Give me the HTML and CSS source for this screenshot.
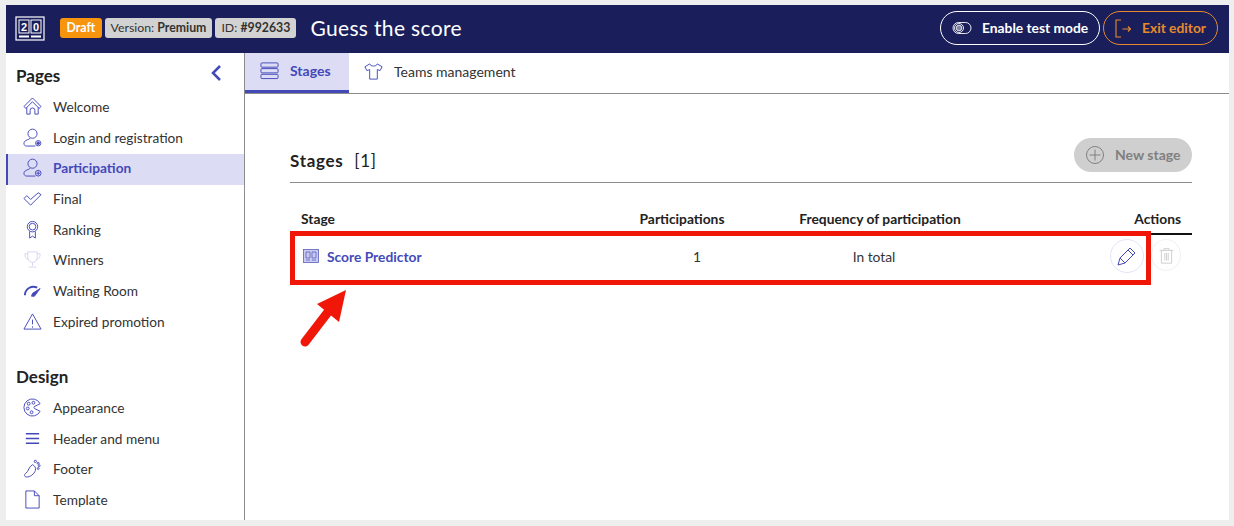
FILE: index.html
```html
<!DOCTYPE html>
<html lang="en">
<head>
<meta charset="utf-8">
<title>Guess the score</title>
<link rel="stylesheet" href="styles.css">
</head>
<body>
<div class="app">
  <header class="topbar">
    <svg class="logo" width="30" height="25" viewBox="0 0 30 25" fill="none" stroke="#fff"><rect x="1" y="1" width="28" height="23" stroke-width="1.2"/><rect x="4" y="4" width="10" height="13" stroke-width="1"/><rect x="16" y="4" width="10" height="13" stroke-width="1"/><text class="logo-num" x="9" y="15" text-anchor="middle">2</text><text class="logo-num" x="21" y="15" text-anchor="middle">0</text><path d="M4 20.500h10M16 20.500h10" stroke-width="2"/></svg>
    <span class="badge draft">Draft</span>
    <span class="badge">Version: <b>Premium</b></span>
    <span class="badge">ID: <b>#992633</b></span>
    <h1 class="title">Guess the score</h1>
    <button class="pill test">
      <svg width="20" height="14" viewBox="0 0 20 14" fill="none" stroke="#fff" stroke-width=".9"><rect x="1" y="1.500" width="18" height="11" rx="5.500"/><circle cx="7" cy="7" r="4.500"/><circle cx="7" cy="7" r="2.800"/><path d="M6 5v4M8 5v4"/></svg>
      <span class="pill-label">Enable test mode</span>
    </button>
    <button class="pill exit">
      <svg width="17" height="19" viewBox="0 0 17 19" fill="none" stroke="#e58a2c" stroke-width="1.100"><path d="M6 1H1v17h5M7.500 10h8M13 7.500l2.500 2.500-2.500 2.500"/></svg>
      <span class="pill-label">Exit editor</span>
    </button>
  </header>
  <div class="body">
    <aside class="sidebar">
      <div class="side-head"><h2>Pages</h2>
        <svg class="collapse" width="12" height="18" viewBox="0 0 12 18" fill="none" stroke="#4449b8" stroke-width="2.500"><path d="M10 2 3 9l7 7"/></svg>
      </div>
      <nav class="menu">
        <a class="item"><svg class="ic" viewBox="0 0 20 20"><path d="M1 10 10 1l9 9-2 2-7-7-7 7zM4 11v7h3.500v-4a2.500 2.500 0 0 1 5 0v4H16v-7"/></svg>Welcome</a>
        <a class="item"><svg class="ic" viewBox="0 0 20 20"><circle cx="10" cy="6" r="4.800"/><path d="M7.500 10.500c-.5 2-6.500 2-6.500 5.500 0 2 1 3 3 3h9"/><circle cx="16" cy="16" r="2.800"/><circle cx="16" cy="16" r="1.300" fill="#4449b8"/></svg>Login and registration</a>
        <a class="item active"><svg class="ic" viewBox="0 0 20 20"><circle cx="10" cy="6" r="4.800"/><path d="M7.500 10.500c-.5 2-6.500 2-6.500 5.500 0 2 1 3 3 3h9"/><circle cx="16" cy="16" r="3"/><path d="M16 14v4M14 16h4"/></svg>Participation</a>
        <a class="item"><svg class="ic" viewBox="0 0 20 20"><path d="m1 10 3-3 4 4 8-7 3 2-11 11z"/></svg>Final</a>
        <a class="item"><svg class="ic" viewBox="0 0 20 20"><circle cx="10" cy="7" r="5.500"/><circle cx="10" cy="7" r="3.500"/><path d="M7 12v7l3-2 3 2v-7"/></svg>Ranking</a>
        <a class="item"><svg class="ic faint" viewBox="0 0 20 20"><path d="M5 2h10v6a5 5 0 0 1-10 0zM5 4H2c0 4 1 5 4 6M15 4h3c0 4-1 5-4 6M10 13v4M6 18h8"/></svg>Winners</a>
        <a class="item"><svg class="ic" viewBox="0 0 20 20"><path d="M2 15a9 9 0 0 1 13-8" stroke-width="2"/><path d="m18 8-8 5-1 3 3 0z" fill="#4449b8"/></svg>Waiting Room</a>
        <a class="item"><svg class="ic" viewBox="0 0 20 20"><path d="M10 2 1 18h18zM10 8v5M10 15v1.500"/></svg>Expired promotion</a>
      </nav>
      <h2 class="design">Design</h2>
      <nav class="menu">
        <a class="item"><svg class="ic" viewBox="0 0 20 20"><path d="M18 14a9 9 0 1 1 0-8l-6 3a1.500 1.500 0 0 0 0 2z"/><circle cx="6" cy="6" r="1.500"/><circle cx="11" cy="5" r="1.500"/><circle cx="5" cy="11" r="1.500"/><circle cx="9" cy="15" r="1.500"/></svg>Appearance</a>
        <a class="item"><svg class="ic thick" viewBox="0 0 20 20"><path d="M3 5h14M3 10h14M3 15h14"/></svg>Header and menu</a>
        <a class="item"><svg class="ic" viewBox="0 0 20 20"><path d="M10 6c2 1 4 3 3 6-1 4-6 7-9 7-3 0-3-3-1-4 3-2 3-7 7-9z"/><circle cx="13" cy="2.500" r="1.200"/><circle cx="16" cy="4.500" r="1"/><circle cx="17" cy="7" r="1"/><circle cx="16" cy="10" r="1"/></svg>Footer</a>
        <a class="item"><svg class="ic" viewBox="0 0 20 20"><path d="M3 1h9l5 5v13H3zM12 1v5h5"/></svg>Template</a>
      </nav>
    </aside>
    <main class="main">
      <div class="tabs">
        <a class="tab on"><svg class="ic tabic" viewBox="0 0 20 20"><rect x="1" y="2" width="18" height="4.500" rx="1"/><rect x="1" y="8" width="18" height="4.500" rx="1"/><rect x="1" y="14" width="18" height="4.500" rx="1"/></svg>Stages</a>
        <a class="tab"><svg class="ic tabic" viewBox="0 0 20 20"><path d="M6 2 1 5l2 4 3-1v10h8V8l3 1 2-4-5-3c-1 3-7 3-8 0z"/></svg>Teams management</a>
      </div>
      <section class="content">
        <div class="stage-head">
          <h3>Stages <span class="count">[1]</span></h3>
          <button class="new"><svg width="20" height="20" viewBox="0 0 20 20" fill="none" stroke="#808080"><circle cx="10" cy="10" r="8.500"/><path d="M10 4.500v11M4.500 10h11"/></svg>New stage</button>
        </div>
        <div class="thead row">
          <span class="c1">Stage</span><span class="c2">Participations</span><span class="c3">Frequency of participation</span><span class="c4">Actions</span>
        </div>
        <div class="row tbody">
          <span class="c1 stage"><svg width="16" height="14" viewBox="0 0 16 14" fill="#c9cbee" stroke="#5b5fc0" stroke-width=".8"><rect x=".5" y=".5" width="15" height="13"/><path d="M3 3h4v6H3zM9 3h4v6H9zM3 11h4M9 11h4"/></svg>Score Predictor</span>
          <span class="c2">1</span>
          <span class="c3">In total</span>
          <span class="c4 acts">
            <span class="round edit"><svg class="ic" viewBox="0 0 20 20"><path d="M1 19l2-7L13 2l5 5L8 17zM3 12l5 5M11 4l5 5"/></svg></span>
            <span class="round del"><svg class="ic gray" viewBox="0 0 20 20"><path d="M2 4h16M7 4V2h6v2M4 4v15h12V4M8 7v9M10 7v9M12 7v9"/></svg></span>
          </span>
        </div>
      </section>
    </main>
  </div>
  <div class="redbox"></div>
  <svg class="arrow" width="50" height="64" viewBox="0 0 50 64" fill="#f11708"><path d="M7 54 30 24" stroke="#f11708" stroke-width="9" stroke-linecap="round"/><path d="M48 2 19 16l22 18z"/></svg>
</div>
</body>
</html>
```

FILE: styles.css
```css
* { box-sizing: border-box; }
html, body { margin: 0; height: 100%; }
body { background: #eeeeee; font-family: "Lato", "Liberation Sans", sans-serif; color: #2a2a2a; overflow: hidden; }
.app { position: relative; width: 1234px; height: 526px; padding: 5px 5px 6px 6px; display: flex; flex-direction: column; }
.topbar { height: 48px; background: #1a1f5c; display: flex; align-items: center; padding: 0 0 2px 9px; flex: none; }
.logo { margin-right: 15px; }
.logo-num { font: 700 11px "Liberation Sans", sans-serif; fill: #fff; stroke: none; }
.badge { background: #d2d2d2; color: #333; font-size: 12.3px; height: 20px; line-height: 20px; padding: 0 6px; border-radius: 3px; margin-right: 3px; white-space: nowrap; }
.badge b { font-weight: 700; }
.badge.draft { background: #f7950f; color: #fff; font-weight: 700; padding: 0 6.5px; }
.title { color: #fff; font-size: 21px; font-weight: 400; margin: 0 0 2px 11px; letter-spacing: .35px; flex: 1; }
.pill { height: 34px; border-radius: 17px; background: transparent; font: 700 13.8px "Lato", sans-serif; display: flex; align-items: center; gap: 10px; padding: 0 8px 0 11px; white-space: nowrap; }
.pill-label { margin-bottom: 2px; }
.pill.test { border: 1.5px solid #fff; color: #fff; width: 160px; margin-right: 3px; }
.pill.exit { border: 1.5px solid #e58a2c; color: #e58a2c; width: 115px; margin-right: 11px; gap: 10px; }
.body { flex: 1; display: flex; background: #fff; min-height: 0; }
.sidebar { width: 239px; flex: none; border-right: 1px solid #8c8c8c; }
.side-head { height: 39.5px; display: flex; justify-content: space-between; align-items: flex-start; padding: 9px 22px 0 10px; }
.side-head h2, .design { font-size: 17px; font-weight: 700; color: #222; margin: 0; line-height: 28px; }
.collapse { margin-top: 2px; }
.design { margin: 25px 0 0 10px; height: 30.5px; }
.menu { display: flex; flex-direction: column; }
.item { height: 30.7px; display: flex; align-items: center; padding: 0 0 3px 15px; font-size: 13.7px; color: #333; gap: 11px; border-left: 2px solid transparent; }
.item.active { background: #dcdcf5; color: #4449b8; font-weight: 700; border-left-color: #4449b8; }
.ic { width: 19px; height: 19px; fill: none; stroke: #4449b8; stroke-width: 1; flex: none; }
.ic.faint { stroke: #d5d6f0; }
.ic.thick { stroke-width: 1.8; }
.ic.gray { stroke: #c8c8c8; }
.main { flex: 1; min-width: 0; display: flex; flex-direction: column; }
.tabs { height: 41px; border-bottom: 1px solid #8c8c8c; display: flex; flex: none; }
.tab { display: flex; align-items: center; font-size: 14px; color: #333; padding: 0 15px 4px; gap: 11px; height: 40px; }
.tab.on { background: #dcdcf5; color: #4449b8; font-weight: 700; border-bottom: 3px solid #4449b8; width: 104px; height: 40px; padding-bottom: 2px; }
.tabic { width: 19px; height: 19px; }
.content { padding: 44px 37px 0 45px; }
.stage-head { display: flex; justify-content: space-between; align-items: center; height: 45px; border-bottom: 1px solid #8c8c8c; }
.stage-head h3 { margin: 0; font-size: 17px; font-weight: 700; color: #222; letter-spacing: .7px; }
.count { font-weight: 400; margin-left: 6px; }
.new { width: 118px; height: 34px; border-radius: 17px; border: 0; background: #cfcfcf; color: #808080; font: 700 14px "Lato", sans-serif; display: flex; align-items: center; gap: 10px; padding: 0 11px; margin-bottom: 11px; }
.row { display: flex; align-items: center; padding: 0 11px; }
.thead { margin-top: 26px; height: 26px; font-size: 13.8px; font-weight: 700; color: #222; border-bottom: 2px solid #111; padding-bottom: 6px; }
.tbody { height: 44px; font-size: 13.8px; color: #333; padding-bottom: 2px; }
.c1 { width: 299px; flex: none; }
.c2 { width: 164px; flex: none; text-align: center; }
.c3 { width: 232px; flex: none; text-align: center; }
.c4 { flex: 1; text-align: right; }
.tbody .c3 { padding-right: 12px; }
.tbody .c2 { padding-left: 30px; }
.stage { display: flex; align-items: center; gap: 8px; color: #4449b8; font-weight: 700; padding-left: 2px; }
.acts { display: flex; justify-content: flex-end; gap: 7px; }
.round { display: flex; align-items: center; justify-content: center; border-radius: 50%; }
.edit { width: 34px; height: 34px; border: 1px solid #e4e4f6; }
.edit .ic { width: 20px; height: 20px; }
.del { width: 30px; height: 32px; border: 1px solid #f2f2f2; }
.del .ic { width: 17px; height: 17px; }
.redbox { position: absolute; left: 290px; top: 231px; width: 861px; height: 54px; border: 5px solid #f11708; }
.arrow { position: absolute; left: 298px; top: 288px; }
```
